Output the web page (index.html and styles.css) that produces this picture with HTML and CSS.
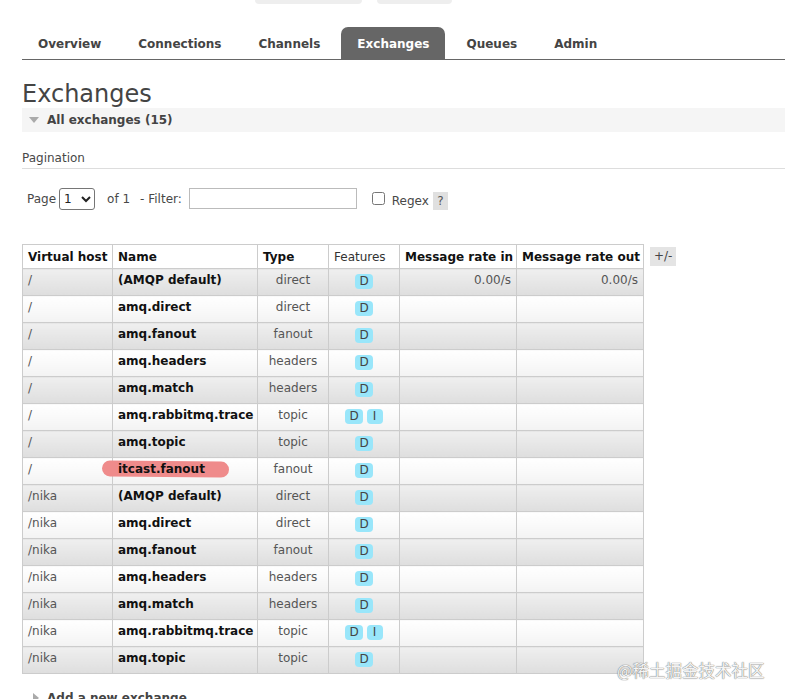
FILE: index.html
```html
<!DOCTYPE html>
<html lang="en">
<head>
  <meta charset="UTF-8" />
  <title>RabbitMQ Management - Exchanges</title>
  <link rel="stylesheet" href="styles.css">
</head>
<body>
  <div class="topo">
    <span class="topo-btn largo"></span>
    <span class="topo-btn curto"></span>
  </div>

  <ul class="abas">
    <li>Overview</li>
    <li>Connections</li>
    <li>Channels</li>
    <li class="ativa">Exchanges</li>
    <li>Queues</li>
    <li>Admin</li>
  </ul>

  <h1>Exchanges</h1>

  <div class="secao aberta"><span class="seta-baixo"></span>All exchanges (15)</div>

  <h3 class="paginacao">Pagination</h3>

  <div class="filtro">
    <span>Page</span>
    <select class="pagina"><option>1</option></select>
    <span class="de">of 1</span>
    <span class="rotulo">- Filter:</span>
    <input type="text" class="campo">
    <input type="checkbox" class="regex-check">
    <span class="regex">Regex</span>
    <span class="ajuda">?</span>
  </div>

  <div class="tabela-wrap">
    <table class="lista">
      <colgroup>
        <col style="width:90px">
        <col style="width:145px">
        <col style="width:71px">
        <col style="width:71px">
        <col style="width:117px">
        <col style="width:127px">
      </colgroup>
      <thead>
        <tr>
          <th>Virtual host</th>
          <th>Name</th>
          <th>Type</th>
          <th class="normal">Features</th>
          <th>Message rate in</th>
          <th>Message rate out</th>
        </tr>
      </thead>
      <tbody id="linhas"></tbody>
    </table>
    <span class="mais-menos">+/-</span>
  </div>

  <div class="secao fechada"><span class="seta-dir"></span>Add a new exchange</div>

  <div class="marca">@稀土掘金技术社区</div>

  <script>
    const exchanges = [
      ['/', '(AMQP default)', 'direct', 'D', true],
      ['/', 'amq.direct', 'direct', 'D'],
      ['/', 'amq.fanout', 'fanout', 'D'],
      ['/', 'amq.headers', 'headers', 'D'],
      ['/', 'amq.match', 'headers', 'D'],
      ['/', 'amq.rabbitmq.trace', 'topic', 'DI'],
      ['/', 'amq.topic', 'topic', 'D'],
      ['/', 'itcast.fanout', 'fanout', 'D'],
      ['/nika', '(AMQP default)', 'direct', 'D'],
      ['/nika', 'amq.direct', 'direct', 'D'],
      ['/nika', 'amq.fanout', 'fanout', 'D'],
      ['/nika', 'amq.headers', 'headers', 'D'],
      ['/nika', 'amq.match', 'headers', 'D'],
      ['/nika', 'amq.rabbitmq.trace', 'topic', 'DI'],
      ['/nika', 'amq.topic', 'topic', 'D']
    ];

    const corpo = document.getElementById('linhas');

    exchanges.forEach((ex, i) => {
      const [vhost, nome, tipo, features, comTaxa] = ex;
      const tr = document.createElement('tr');
      tr.className = i % 2 === 0 ? 'alt1' : 'alt2';

      // o exchange marcado com caneta vermelha
      const nomeHtml = nome === 'itcast.fanout'
        ? `<span class="marcado">${nome}</span>`
        : nome;

      const badges = features.split('').map(f => `<abbr>${f}</abbr>`).join(' ');
      const taxa = comTaxa ? '0.00/s' : '';

      tr.innerHTML = `
        <td class="vhost">${vhost}</td>
        <td class="nome">${nomeHtml}</td>
        <td class="tipo">${tipo}</td>
        <td class="features">${badges}</td>
        <td class="taxa">${taxa}</td>
        <td class="taxa">${taxa}</td>`;
      corpo.appendChild(tr);
    });
  </script>
</body>
</html>
```

FILE: styles.css
```css
body {
  margin: 0;
  padding: 0 0 0 22px;
  font-family: 'DejaVu Sans', Verdana, sans-serif;
  font-size: 12px;
  color: #484848;
  background: #fff;
  overflow: hidden;
}

.topo {
  height: 27px;
  display: flex;
  align-items: flex-start;
  padding-left: 233px;
}
.topo-btn {
  display: block;
  height: 4px;
  background: #eee;
  border-radius: 0 0 6px 6px;
}
.topo-btn.largo { width: 107px; }
.topo-btn.curto { width: 75px; margin-left: 15px; }

.abas {
  list-style: none;
  margin: 0;
  padding: 0;
  display: flex;
  border-bottom: 1px solid #666;
}
.abas li {
  height: 30px;
  padding: 2px 16px 0;
  line-height: 31px;
  margin-right: 5px;
  font-weight: bold;
  color: #444;
  border-radius: 7px 7px 0 0;
}
.abas li.ativa {
  background: #666;
  color: #fff;
}

h1 {
  margin: 21px 0 0;
  font-size: 24px;
  line-height: 27px;
  font-weight: normal;
  color: #444;
}

.secao {
  height: 24px;
  line-height: 24px;
  font-weight: bold;
  color: #444;
  display: flex;
  align-items: center;
}
.secao.aberta {
  background: #f5f5f5;
  padding-left: 7px;
}
.seta-baixo {
  width: 0;
  height: 0;
  border-left: 5px solid transparent;
  border-right: 5px solid transparent;
  border-top: 6px solid #aaa;
  margin-right: 8px;
}
.seta-dir {
  width: 0;
  height: 0;
  border-top: 5px solid transparent;
  border-bottom: 5px solid transparent;
  border-left: 6px solid #aaa;
  margin-right: 8px;
}
.secao.fechada {
  margin-top: 12px;
  padding-left: 11px;
}

.paginacao {
  margin: 18px 0 0;
  font-size: 12px;
  font-weight: normal;
  line-height: 16px;
  padding-bottom: 2px;
  border-bottom: 1px solid #ddd;
  color: #484848;
}

.filtro {
  display: flex;
  align-items: center;
  height: 23px;
  margin-top: 18px;
  padding-left: 5px;
}
.pagina {
  width: 36px;
  height: 22px;
  margin-left: 3px;
  font-family: 'DejaVu Sans', Verdana, sans-serif;
  font-size: 12px;
  border: 1px solid #767676;
  border-radius: 3px;
  background: #fff;
  color: #222;
}
.de { margin-left: 12px; }
.rotulo { margin-left: 10px; }
.campo {
  width: 168px;
  height: 21px;
  box-sizing: border-box;
  margin: 0 0 0 7px;
  border: 1px solid #bbb;
}
.regex-check {
  width: 13px;
  height: 13px;
  margin: 0 0 0 15px;
}
.regex {
  margin-left: 7px;
  position: relative;
  top: 2px;
}
.ajuda {
  margin-left: 4px;
  width: 15px;
  height: 18px;
  line-height: 18px;
  text-align: center;
  background: #e0e0e0;
  color: #555;
  position: relative;
  top: 2px;
}

.tabela-wrap {
  display: flex;
  align-items: flex-start;
  margin-top: 34px;
}

table.lista {
  border-collapse: collapse;
  table-layout: fixed;
  width: 622px;
}
.lista th,
.lista td {
  border: 1px solid #ccc;
  padding: 3px 5px 7px;
  line-height: 16px;
  height: 16px;
  vertical-align: top;
  white-space: nowrap;
}
.lista th {
  background: #fff;
  color: #111;
  text-align: left;
  padding: 4px 5px 3px;
}
.lista th.normal {
  font-weight: normal;
  color: #333;
}

.lista tr.alt1 td {
  background: linear-gradient(#efefef, #dedede);
}
.lista tr.alt2 td {
  background: linear-gradient(#fff, #f3f3f3);
}

.vhost { color: #555; }
.nome { font-weight: bold; color: #111; }
.tipo { text-align: center; color: #555; }
.features { text-align: center; }
.taxa { text-align: right; color: #555; }

abbr {
  display: inline-block;
  min-width: 8px;
  height: 15px;
  line-height: 15px;
  padding: 0 4px;
  background: #99e6fa;
  border-radius: 4px;
  color: #444;
  text-decoration: none;
  vertical-align: top;
  position: relative;
  top: 2px;
}

/* risco de marca-texto por cima do nome */
.marcado {
  position: relative;
  z-index: 0;
}
.marcado::before {
  content: '';
  position: absolute;
  left: -16px;
  right: -24px;
  top: -1px;
  bottom: -1px;
  background: #ef8b8b;
  border-radius: 9px;
  transform: rotate(0.6deg);
  z-index: -1;
}

.mais-menos {
  margin: 3px 0 0 6px;
  padding: 0 4px;
  height: 19px;
  line-height: 19px;
  background: #e4e4e4;
  color: #444;
}

.marca {
  position: absolute;
  left: 617px;
  top: 658px;
  font-family: 'Noto Sans CJK SC', 'DejaVu Sans', sans-serif;
  font-size: 16.5px;
  color: #f4f4f4;
  text-shadow: 0 0 1px #777, 0 0 1px #777;
}
```
